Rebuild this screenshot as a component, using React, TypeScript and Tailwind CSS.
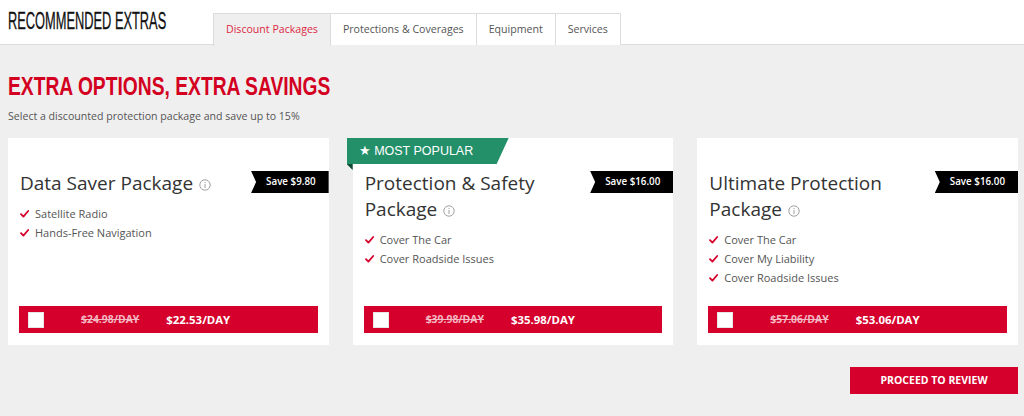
import React from "react";

const RED = "bg-[#d5002b]";

function Check() {
  return (
    <svg width="9" height="8" viewBox="0 0 9 8" className="shrink-0">
      <path d="M1 4.2 L3.4 6.6 L8.2 1" fill="none" stroke="#d5002b" strokeWidth="1.8" strokeLinecap="round" strokeLinejoin="round" />
    </svg>
  );
}

function Info() {
  return (
    <svg width="12" height="12" viewBox="0 0 12 12" className="inline-block ml-[6px] align-[-1px]">
      <circle cx="6" cy="6" r="5.2" fill="none" stroke="#a0a0a0" strokeWidth="1" />
      <rect x="5.5" y="5" width="1" height="4" fill="#a0a0a0" />
      <rect x="5.5" y="3" width="1" height="1.1" fill="#a0a0a0" />
    </svg>
  );
}

type Pkg = {
  title: string;
  save: string;
  items: string[];
  old: string;
  price: string;
  popular?: boolean;
};

const pkgs: Pkg[] = [
  { title: "Data Saver Package", save: "Save $9.80", items: ["Satellite Radio", "Hands-Free Navigation"], old: "$24.98/DAY", price: "$22.53/DAY" },
  { title: "Protection & Safety Package", save: "Save $16.00", items: ["Cover The Car", "Cover Roadside Issues"], old: "$39.98/DAY", price: "$35.98/DAY", popular: true },
  { title: "Ultimate Protection Package", save: "Save $16.00", items: ["Cover The Car", "Cover My Liability", "Cover Roadside Issues"], old: "$57.06/DAY", price: "$53.06/DAY" },
];

function Card({ p }: { p: Pkg }) {
  return (
    <div className="relative bg-white flex flex-col h-[207px] pt-[32px] pb-[12px] px-[11px]">
      {p.popular && (
        <>
          <div className="absolute left-[-6px] top-0 h-[26px] w-[162px] bg-[#23906a] [clip-path:polygon(0_0,100%_0,calc(100%-12px)_100%,0_100%)] pl-[12px] text-white text-[12.5px] leading-[26px] font-['Liberation_Sans',Arial,sans-serif]">
            ★ MOST POPULAR
          </div>
          <div className="absolute left-[-6px] top-[26px] w-[6px] h-[6px] bg-[#0d4a34] [clip-path:polygon(0_0,100%_0,100%_100%)]" />
        </>
      )}
      <div className="absolute right-0 top-[33px] h-[22px] bg-black [clip-path:polygon(0_0,100%_0,100%_100%,0_100%,5px_50%)] pl-[15px] pr-[13px] text-white text-[9.8px] font-semibold leading-[22px]">
        {p.save}
      </div>
      <div className="pl-[1px] pr-[80px] text-[19px] leading-[26px] text-[#333]">
        {p.title}
        <Info />
      </div>
      <ul className="mt-[8px] pl-[1px]">
        {p.items.map((it) => (
          <li key={it} className="flex items-center gap-[6px] text-[11px] leading-[19px] text-[#555]">
            <Check />
            <span>{it}</span>
          </li>
        ))}
      </ul>
      <div className={`mt-auto h-[27px] ${RED} flex items-center`}>
        <div className="ml-[9px] w-4 h-4 bg-white border border-[#e6e6e6]" />
        <span className="ml-[37px] text-[10.4px] font-bold text-[#f3b8c2] line-through">{p.old}</span>
        <span className="ml-[27px] text-[11.4px] font-bold text-white">{p.price}</span>
      </div>
    </div>
  );
}

export default function App() {
  const tabs = ["Protections & Coverages", "Equipment", "Services"];
  return (
    <div className="w-[1024px] h-[416px] overflow-hidden bg-[#efefef] font-['Open_Sans','Liberation_Sans',sans-serif]">
      <div className="h-[45px] bg-white border-b border-[#dcdcdc] flex pl-2">
        <div className="w-[205px] shrink-0 flex items-center">
          <span className="inline-block origin-left scale-x-[0.57] scale-y-[1.05] whitespace-nowrap font-['Liberation_Sans',Arial,sans-serif] text-[22.5px] leading-none text-[#111] [-webkit-text-stroke:0.3px_#111]">
            RECOMMENDED EXTRAS
          </span>
        </div>
        <div className="flex items-end h-[45px]">
          <div className="h-[33px] mb-[-1px] px-3 flex items-center bg-[#efefef] border border-b-0 border-[#dcdcdc] text-[10.6px] text-[#dc2a44]">
            Discount Packages
          </div>
          {tabs.map((t) => (
            <div key={t} className="h-[32px] px-3 flex items-center bg-white border-t border-r border-[#dcdcdc] text-[10.6px] text-[#555]">
              {t}
            </div>
          ))}
        </div>
      </div>
      <div className="pl-2 pr-[6px] pt-[29px]">
        <div className="h-[25px] leading-[25px]">
          <span className="inline-block origin-left scale-x-[0.77] whitespace-nowrap font-['Liberation_Sans',Arial,sans-serif] font-bold text-[25px] text-[#d3001f]">
            EXTRA OPTIONS, EXTRA SAVINGS
          </span>
        </div>
        <div className="mt-[9px] text-[10.6px] leading-[16px] text-[#555]">
          Select a discounted protection package and save up to 15%
        </div>
        <div className="mt-[14px] grid grid-cols-3 gap-6">
          {pkgs.map((p) => (
            <Card key={p.title} p={p} />
          ))}
        </div>
        <div className="mt-[22px] flex justify-end">
          <button className={`w-[168px] h-[27px] ${RED} text-white text-[10.5px] font-bold`}>PROCEED TO REVIEW</button>
        </div>
      </div>
    </div>
  );
}
